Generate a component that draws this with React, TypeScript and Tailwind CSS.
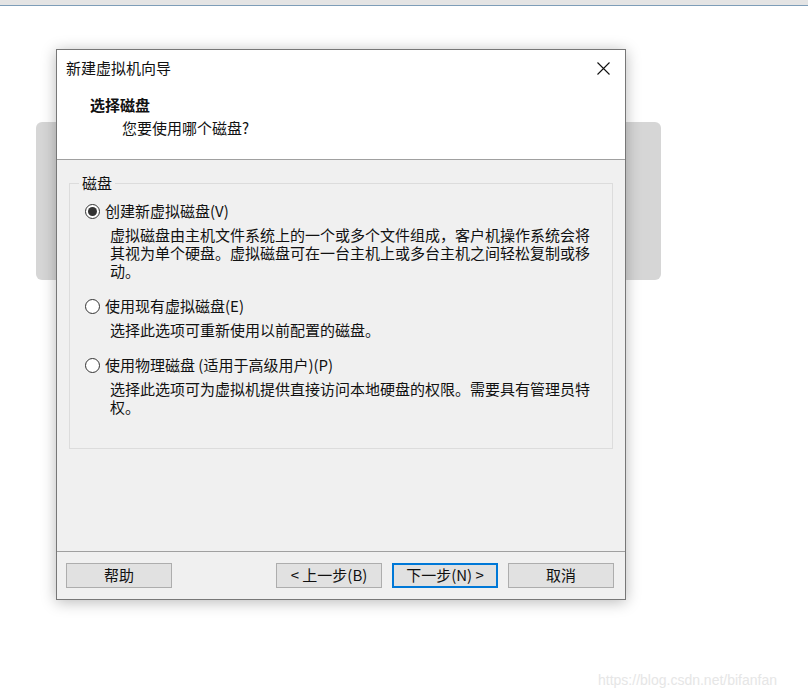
import React from "react";

const font = {
  fontFamily:
    '"Microsoft YaHei", "Noto Sans CJK SC", "Noto Sans", sans-serif',
};

const Radio = ({ checked }: { checked?: boolean }) => (
  <span className="flex h-[15px] w-[15px] shrink-0 items-center justify-center rounded-full border border-[#333] bg-white">
    {checked && <span className="h-[9px] w-[9px] rounded-full bg-[#333]" />}
  </span>
);

const Option = ({
  label,
  desc,
  checked,
}: {
  label: string;
  desc: string[];
  checked?: boolean;
}) => (
  <div className="flex flex-col">
    <label className="flex h-[22px] items-center gap-[5px]">
      <Radio checked={checked} />
      <span>{label}</span>
    </label>
    <div className="mt-[4px] pl-[25px] leading-[18px]">
      {desc.map((d) => (
        <div key={d}>{d}</div>
      ))}
    </div>
  </div>
);

const Button = ({ children, primary }: { children: React.ReactNode; primary?: boolean }) => (
  <button
    className={
      "flex h-[25px] w-[106px] items-center justify-center bg-[#e1e1e1] text-[15px] text-[#111] " +
      (primary ? "border-2 border-[#0078d7]" : "border border-[#adadad]")
    }
  >
    {children}
  </button>
);

export default function App() {
  return (
    <div
      className="relative h-[698px] w-[808px] overflow-hidden bg-white text-[#111]"
      style={font}
    >
      <div className="h-[6px] border-b border-[#7d9db8] bg-[#e4e4e4]" />
      <div className="ml-[36px] mt-[116px] h-[158px] w-[625px] rounded-[6px] bg-[#d6d6d6]" />

      {/* dialog */}
      <div className="absolute left-[56px] top-[49px] flex h-[551px] w-[570px] flex-col border border-[#777] bg-[#f0f0f0] text-[15px] shadow-[0_2px_14px_rgba(0,0,0,0.28)]">
        <div className="h-[110px] border-b border-[#a0a0a0] bg-white">
          <div className="flex h-[37px] items-center justify-between pl-[9px] pr-[15px]">
            <span>新建虚拟机向导</span>
            <svg width="13" height="13" viewBox="0 0 13 13" className="mt-[-1px]">
              <path d="M0.5 0.5 L12.5 12.5 M12.5 0.5 L0.5 12.5" stroke="#111" strokeWidth="1.1" />
            </svg>
          </div>
          <div className="pl-[33px] pt-[7px] font-bold leading-[22px]">选择磁盘</div>
          <div className="pl-[65px] pt-[1px] leading-[22px]">您要使用哪个磁盘?</div>
        </div>

        <div className="flex flex-1 flex-col px-[12px] pt-[14px]">
          <fieldset className="h-[275px] border border-[#dcdcdc] px-[15px] pt-[8px]">
            <legend className="ml-[-6px] px-[3px] leading-[18px]">磁盘</legend>
            <div className="flex flex-col gap-[15px]">
              <Option
                checked
                label="创建新虚拟磁盘(V)"
                desc={[
                  "虚拟磁盘由主机文件系统上的一个或多个文件组成，客户机操作系统会将",
                  "其视为单个硬盘。虚拟磁盘可在一台主机上或多台主机之间轻松复制或移",
                  "动。",
                ]}
              />
              <Option label="使用现有虚拟磁盘(E)" desc={["选择此选项可重新使用以前配置的磁盘。"]} />
              <Option
                label="使用物理磁盘 (适用于高级用户)(P)"
                desc={[
                  "选择此选项可为虚拟机提供直接访问本地硬盘的权限。需要具有管理员特",
                  "权。",
                ]}
              />
            </div>
          </fieldset>
        </div>

        <div className="flex h-[48px] items-center border-t border-[#a0a0a0] pl-[9px] pr-[11px] pb-[1px]">
          <Button>帮助</Button>
          <div className="ml-auto flex gap-[10px]">
            <Button>&lt; 上一步(B)</Button>
            <Button primary>下一步(N) &gt;</Button>
            <Button>取消</Button>
          </div>
        </div>
      </div>

      <div
        className="absolute left-[598px] top-[670px] text-[14px] text-[#e6e6e6]"
        style={{ fontFamily: '"Liberation Sans", Arial, sans-serif' }}
      >
        https://blog.csdn.net/bifanfan
      </div>
    </div>
  );
}
